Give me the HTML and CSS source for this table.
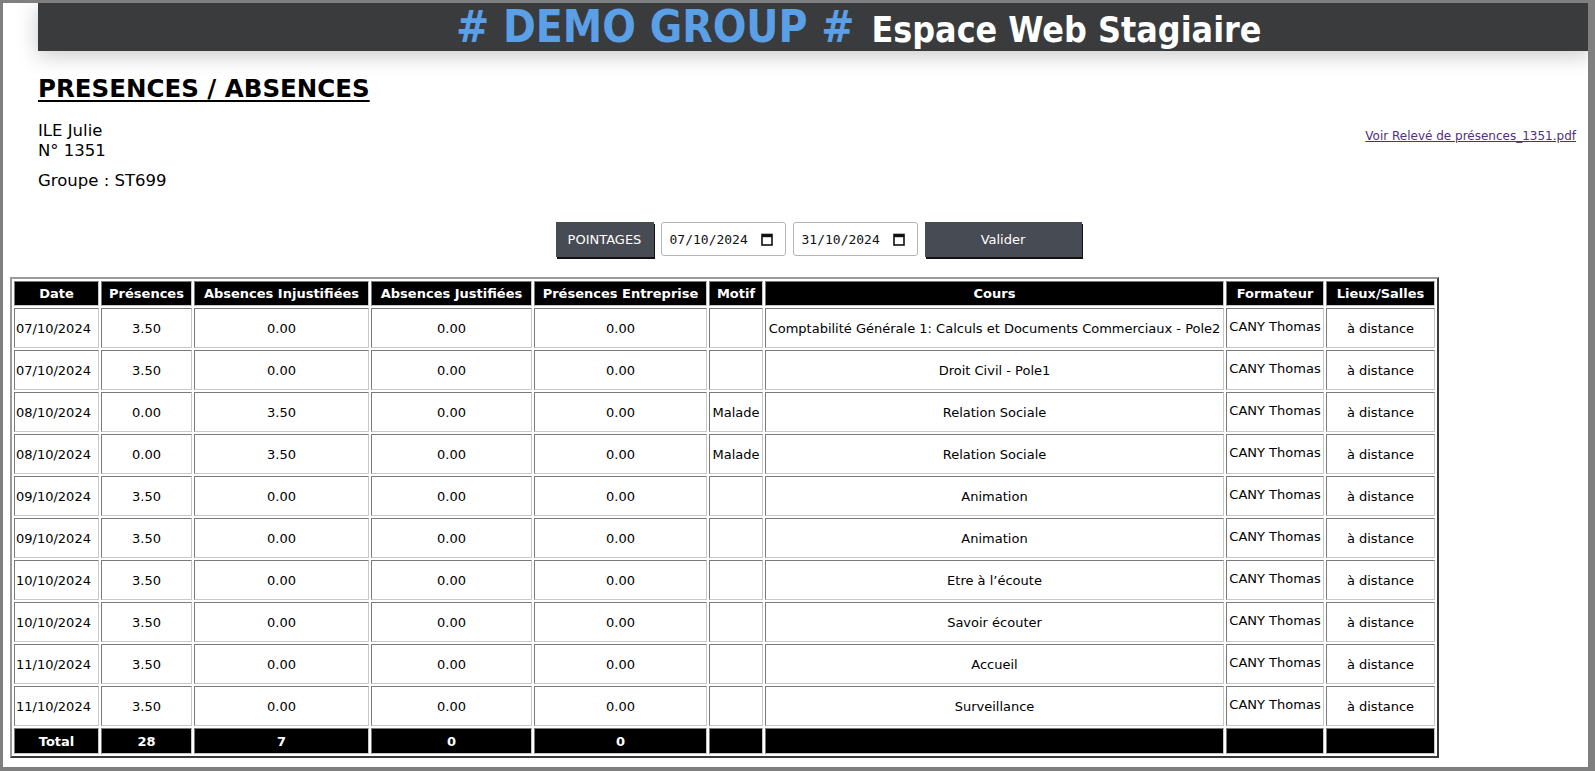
FILE: index.html
```html
<!DOCTYPE html>
<html lang="fr">
<head>
<meta charset="utf-8">
<title>Espace Web Stagiaire</title>
<link rel="stylesheet" href="styles.css">
</head>
<body>
<div class="frame">
  <header class="topbar">
    <span class="brand"># DEMO GROUP #</span><span class="subtitle">Espace Web Stagiaire</span>
  </header>

  <main class="content">
    <h1 class="page-title">PRESENCES / ABSENCES</h1>

    <div class="info-row">
      <div class="info">
        <div class="info-line">ILE Julie</div>
        <div class="info-line">N° 1351</div>
        <div class="info-line group">Groupe : ST699</div>
      </div>
      <a class="pdf-link" href="#">Voir Relevé de présences_1351.pdf</a>
    </div>

    <div class="controls">
      <button class="btn btn-small" type="button">POINTAGES</button>
      <div class="date-field">
        <span class="date-text">07/10/2024</span>
        <svg class="cal" width="12" height="13" viewBox="0 0 12 13"><rect x="1" y="1.5" width="10" height="10.5" fill="none" stroke="#111" stroke-width="1.6"/><rect x="1" y="1" width="10" height="3.2" fill="#111"/></svg>
      </div>
      <div class="date-field">
        <span class="date-text">31/10/2024</span>
        <svg class="cal" width="12" height="13" viewBox="0 0 12 13"><rect x="1" y="1.5" width="10" height="10.5" fill="none" stroke="#111" stroke-width="1.6"/><rect x="1" y="1" width="10" height="3.2" fill="#111"/></svg>
      </div>
      <button class="btn btn-wide" type="button">Valider</button>
    </div>

    <table class="grid">
      <colgroup>
        <col class="c-date"><col class="c-pres"><col class="c-abs-inj"><col class="c-abs-just"><col class="c-pres-ent"><col class="c-motif"><col class="c-cours"><col class="c-form"><col class="c-lieu">
      </colgroup>
      <thead>
        <tr>
          <th>Date</th><th>Présences</th><th>Absences Injustifiées</th><th>Absences Justifiées</th><th>Présences Entreprise</th><th>Motif</th><th>Cours</th><th>Formateur</th><th>Lieux/Salles</th>
        </tr>
      </thead>
      <tbody>
        <tr><td class="left">07/10/2024</td><td>3.50</td><td>0.00</td><td>0.00</td><td>0.00</td><td></td><td>Comptabilité Générale 1: Calculs et Documents Commerciaux - Pole2</td><td class="form">CANY Thomas</td><td>à distance</td></tr>
        <tr><td class="left">07/10/2024</td><td>3.50</td><td>0.00</td><td>0.00</td><td>0.00</td><td></td><td>Droit Civil - Pole1</td><td class="form">CANY Thomas</td><td>à distance</td></tr>
        <tr><td class="left">08/10/2024</td><td>0.00</td><td>3.50</td><td>0.00</td><td>0.00</td><td>Malade</td><td>Relation Sociale</td><td class="form">CANY Thomas</td><td>à distance</td></tr>
        <tr><td class="left">08/10/2024</td><td>0.00</td><td>3.50</td><td>0.00</td><td>0.00</td><td>Malade</td><td>Relation Sociale</td><td class="form">CANY Thomas</td><td>à distance</td></tr>
        <tr><td class="left">09/10/2024</td><td>3.50</td><td>0.00</td><td>0.00</td><td>0.00</td><td></td><td>Animation</td><td class="form">CANY Thomas</td><td>à distance</td></tr>
        <tr><td class="left">09/10/2024</td><td>3.50</td><td>0.00</td><td>0.00</td><td>0.00</td><td></td><td>Animation</td><td class="form">CANY Thomas</td><td>à distance</td></tr>
        <tr><td class="left">10/10/2024</td><td>3.50</td><td>0.00</td><td>0.00</td><td>0.00</td><td></td><td>Etre à l’écoute</td><td class="form">CANY Thomas</td><td>à distance</td></tr>
        <tr><td class="left">10/10/2024</td><td>3.50</td><td>0.00</td><td>0.00</td><td>0.00</td><td></td><td>Savoir écouter</td><td class="form">CANY Thomas</td><td>à distance</td></tr>
        <tr><td class="left">11/10/2024</td><td>3.50</td><td>0.00</td><td>0.00</td><td>0.00</td><td></td><td>Accueil</td><td class="form">CANY Thomas</td><td>à distance</td></tr>
        <tr><td class="left">11/10/2024</td><td>3.50</td><td>0.00</td><td>0.00</td><td>0.00</td><td></td><td>Surveillance</td><td class="form">CANY Thomas</td><td>à distance</td></tr>
      </tbody>
      <tfoot>
        <tr><th>Total</th><th>28</th><th>7</th><th>0</th><th>0</th><th></th><th></th><th></th><th></th></tr>
      </tfoot>
    </table>
  </main>
</div>
</body>
</html>
```

FILE: styles.css
```css
html, body {
  margin: 0;
  padding: 0;
  background: #ffffff;
}

body {
  font-family: "DejaVu Sans", Verdana, sans-serif;
  color: #000;
}

.frame {
  box-sizing: border-box;
  width: 1595px;
  height: 771px;
  border-style: solid;
  border-color: #7f7f7f;
  border-width: 3px 7px 4px 3px;
  background: #fff;
  overflow: hidden;
}

.topbar {
  box-sizing: border-box;
  height: 48px;
  margin: 0 -4px 0 35px;
  padding-left: 418px;
  background: #3a3b3d;
  box-shadow: 0 4px 22px rgba(0, 0, 0, 0.22);
  font-family: "DejaVu Sans Condensed", "DejaVu Sans", sans-serif;
  font-weight: bold;
  white-space: nowrap;
  line-height: 48px;
  position: relative;
}

.brand {
  color: #5b9fe6;
  font-size: 44px;
}

.subtitle {
  color: #ffffff;
  font-size: 35.5px;
  margin-left: 17px;
}

.content {
  padding-left: 35px;
}

.page-title {
  margin: 24px 0 0 0;
  font-size: 24.5px;
  line-height: 28px;
  font-weight: bold;
  text-decoration: underline;
  text-decoration-thickness: 2px;
  text-underline-offset: 3px;
}

.info-row {
  display: flex;
  justify-content: space-between;
  align-items: flex-start;
  margin-top: 18px;
  padding-right: 12px;
}

.info-line {
  font-size: 16.5px;
  line-height: 20px;
}

.info-line.group {
  margin-top: 10px;
}

.pdf-link {
  font-size: 12px;
  line-height: 16px;
  margin-top: 7px;
  color: #52307c;
  text-decoration: underline;
}

.controls {
  display: flex;
  justify-content: center;
  align-items: center;
  gap: 7px;
  margin-top: 30px;
  padding-left: 11px;
  height: 36px;
}

.btn {
  box-sizing: border-box;
  height: 35px;
  border: none;
  background: #474b53;
  color: #ffffff;
  font-family: "DejaVu Sans", Verdana, sans-serif;
  font-size: 13px;
  box-shadow: 1px 2px 0 #111;
  padding: 0;
}

.btn-small {
  width: 98px;
}

.btn-wide {
  width: 157px;
}

.date-field {
  box-sizing: border-box;
  width: 125px;
  height: 34px;
  border: 1px solid #b5b5b5;
  border-radius: 3px;
  background: #fff;
  display: flex;
  align-items: center;
  justify-content: space-between;
  padding: 0 12px 0 8px;
}

.date-text {
  font-family: "DejaVu Sans Mono", monospace;
  font-size: 13px;
  color: #111;
}

.cal {
  display: block;
}

.grid {
  margin: 20px 0 0 -28px;
  table-layout: fixed;
  width: 1429px;
  border-collapse: separate;
  border-spacing: 2px;
  border-style: solid;
  border-width: 2px;
  border-color: #9a9a9a #3a3a3a #3a3a3a #9a9a9a;
  font-size: 13px;
}

.c-date { width: 85px; }
.c-pres { width: 91px; }
.c-abs-inj { width: 175px; }
.c-abs-just { width: 161px; }
.c-pres-ent { width: 173px; }
.c-motif { width: 54px; }
.c-cours { width: 459px; }
.c-form { width: 98px; }
.c-lieu { width: 109px; }

.grid th,
.grid td {
  box-sizing: border-box;
  border: 1px solid;
  border-color: #7a7a7a #c8c8c8 #c8c8c8 #7a7a7a;
  padding: 0 1px;
  text-align: center;
  white-space: nowrap;
  overflow: hidden;
}

.grid th {
  background: #000;
  color: #fff;
  font-weight: bold;
  height: 25px;
}

.grid tfoot th {
  height: 26px;
}

.grid td {
  height: 40px;
  background: #fff;
}

.grid td.left {
  text-align: left;
}

.grid td.form {
  padding-bottom: 4px;
}
```
